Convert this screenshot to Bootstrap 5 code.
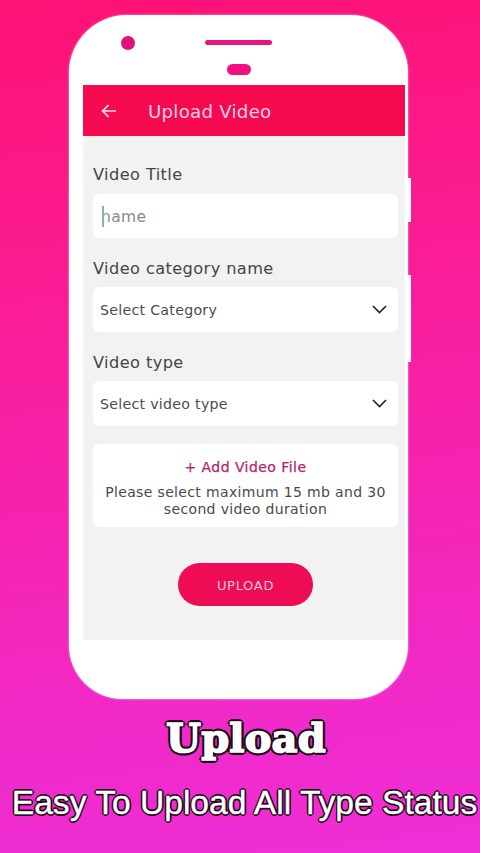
<!DOCTYPE html>
<html lang="en">
<head>
<meta charset="utf-8">
<title>Upload</title>
<link href="https://cdn.jsdelivr.net/npm/bootstrap@5.3.0/dist/css/bootstrap.min.css" rel="stylesheet">
<style>
html,body{height:853px;overflow:hidden}
body{width:480px;background:linear-gradient(172deg,#fd1274 0%,#fb1a8c 25%,#f622ad 55%,#f02ac8 80%,#ef2ed6 100%);font-family:"DejaVu Sans",sans-serif}
.stage{padding-top:15px}
.phone{position:relative;width:339px;height:684px;margin-left:69px;background:#fff;border-radius:58px 58px 54px 54px;box-shadow:0 0 2px rgba(255,255,255,.8)}
.side-key{position:absolute;left:100%;width:3px;background:#fff}
.key-a{top:163px;height:44px}
.key-b{top:260px;height:87px}
.notch{height:70px;position:relative}
.cam{position:absolute;left:52px;top:21px;width:14px;height:14px;border-radius:50%;background:#e3127a}
.speaker{position:absolute;left:136px;top:25px;width:67px;height:5px;border-radius:3px;background:#e3167f}
.sensor{position:absolute;left:158px;top:49px;width:24px;height:11px;border-radius:6px;background:#f01080}
.screen{width:322px;margin-left:14px}
.appbar{height:51px;background:#f50a50;padding-left:18px}
.appbar-title{font-size:18.2px;margin-left:31px;color:#ffd3e4;padding-top:2px;letter-spacing:.25px}
.formbody{height:504px;background:#f2f2f2;padding:26px 7px 0 10px}
.fld-label{height:24px;line-height:24px;font-size:16.2px;color:#454545;margin:0;padding-top:1px;letter-spacing:.4px}
.mt-a{margin-top:18px}
.input-wrap{position:relative;margin-top:8px}
.txt-input{height:44px;border:0;border-radius:6px;padding:1px 8px 0;font-size:15.5px;letter-spacing:.4px;font-family:"DejaVu Sans",sans-serif}
.txt-input::placeholder{color:#8b8b8b}
.caret-bar{position:absolute;left:9px;top:12px;width:2px;height:21px;background:#7fb8a0}
.pick-row{height:45px;margin-top:7px;background:#fff;border-radius:6px;padding:0 11px 0 7px;font-size:14.2px;letter-spacing:.27px;color:#4d4d4d}
.pick-row span{padding-top:2px}
.file-box{height:83px;margin-top:18px;background:#fff;border-radius:6px;padding-top:15px;text-align:center;color:#4a4a4a;font-size:14px;line-height:17px;letter-spacing:.35px}
.file-add{color:#b3256f;margin-bottom:8px;line-height:17px;letter-spacing:.45px;-webkit-text-stroke:.25px #b3256f}
.send-btn{display:block;width:135px;height:43px;margin:36px 0 0 85px;border:0;border-radius:22px;background:#ee0c55;color:#ffc6dc;font-size:13px;letter-spacing:.7px;padding:2px 0 0}
.send-btn:hover{background:#ee0c55;color:#ffc6dc}
.caption{text-align:center;color:#fff;margin:0}
.cap-a{font-family:"DejaVu Serif",serif;font-weight:700;font-size:40px;line-height:46px;margin-top:16px;padding-left:12px;letter-spacing:.2px;-webkit-text-stroke:1.6px #fff;text-shadow:3px 0 0 #1c0a18,-3px 0 0 #1c0a18,0 3px 0 #1c0a18,0 -3px 0 #1c0a18,2px 2px 0 #1c0a18,-2px 2px 0 #1c0a18,2px -2px 0 #1c0a18,-2px -2px 0 #1c0a18}
.cap-b{font-family:"Liberation Sans",sans-serif;font-size:33.6px;line-height:40px;margin-top:22px;white-space:nowrap;padding-left:9px;-webkit-text-stroke:.4px #fff;text-shadow:1.7px 0 0 #1c0a18,-1.7px 0 0 #1c0a18,0 1.7px 0 #1c0a18,0 -1.7px 0 #1c0a18,1.2px 1.2px 0 #1c0a18,-1.2px 1.2px 0 #1c0a18,1.2px -1.2px 0 #1c0a18,-1.2px -1.2px 0 #1c0a18}
</style>
</head>
<body>
<div class="stage">
  <div class="phone">
    <span class="side-key key-a"></span>
    <span class="side-key key-b"></span>
    <div class="notch">
      <span class="cam"></span>
      <span class="speaker"></span>
      <span class="sensor"></span>
    </div>
    <div class="screen">
      <div class="appbar d-flex align-items-center">
        <svg width="16" height="14" viewBox="0 0 16 14" fill="none" stroke="#ffe3ee" stroke-width="1.7" aria-hidden="true"><path d="M15 7H1.8M7.5 1.2 1.6 7l5.9 5.8"/></svg>
        <span class="appbar-title">Upload Video</span>
      </div>
      <form class="formbody">
        <p class="fld-label">Video Title</p>
        <div class="input-wrap">
          <input class="form-control txt-input" type="text" placeholder="name">
          <span class="caret-bar"></span>
        </div>
        <p class="fld-label mt-a">Video category name</p>
        <div class="pick-row d-flex align-items-center justify-content-between">
          <span>Select Category</span>
          <svg width="15" height="9" viewBox="0 0 15 9" fill="none" stroke="#222" stroke-width="1.6" aria-hidden="true"><path d="M1 1l6.5 6.5L14 1"/></svg>
        </div>
        <p class="fld-label mt-a">Video type</p>
        <div class="pick-row d-flex align-items-center justify-content-between">
          <span>Select video type</span>
          <svg width="15" height="9" viewBox="0 0 15 9" fill="none" stroke="#222" stroke-width="1.6" aria-hidden="true"><path d="M1 1l6.5 6.5L14 1"/></svg>
        </div>
        <div class="file-box">
          <div class="file-add">+ Add Video File</div>
          <div>Please select maximum 15 mb and 30<br>second video duration</div>
        </div>
        <button type="button" class="btn send-btn">UPLOAD</button>
      </form>
    </div>
  </div>
  <h1 class="caption cap-a">Upload</h1>
  <p class="caption cap-b">Easy To Upload All Type Status</p>
</div>
<script src="https://cdn.jsdelivr.net/npm/bootstrap@5.3.0/dist/js/bootstrap.bundle.min.js"></script>
</body>
</html>
